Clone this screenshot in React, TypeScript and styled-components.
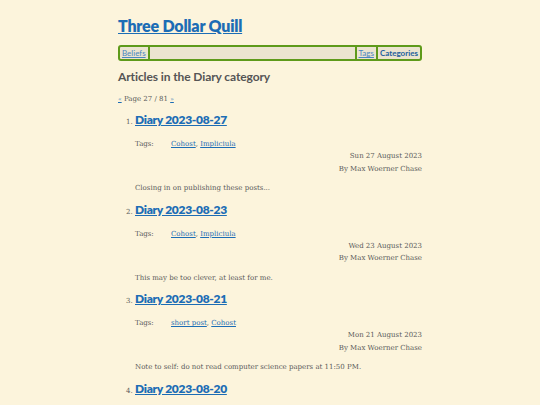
import React from "react";
import styled, { createGlobalStyle } from "styled-components";

interface IArticle {
    title: string;
    tags: string[];
    date: string;
    summary: string;
}

const articles: IArticle[] = [
    { title: "Diary 2023-08-27", tags: ["Cohost", "Impliciula"], date: "Sun 27 August 2023", summary: "Closing in on publishing these posts..." },
    { title: "Diary 2023-08-23", tags: ["Cohost", "Impliciula"], date: "Wed 23 August 2023", summary: "This may be too clever, at least for me." },
    { title: "Diary 2023-08-21", tags: ["short post", "Cohost"], date: "Mon 21 August 2023", summary: "Note to self: do not read computer science papers at 11:50 PM." },
    { title: "Diary 2023-08-20", tags: ["Cohost"], date: "Sun 20 August 2023", summary: "" },
];

const App = () => {
    return (
        <>
            <Global />
            <Page>
                <SiteTitle><a href="#">Three Dollar Quill</a></SiteTitle>
                <Nav>
                    <NavItem href="#">Beliefs</NavItem>
                    <NavSpacer />
                    <NavItem href="#">Tags</NavItem>
                    <NavItem href="#" $active>Categories</NavItem>
                </Nav>
                <Heading>Articles in the Diary category</Heading>
                <Pager>
                    <a href="#">«</a> Page 27 / 81 <a href="#">»</a>
                </Pager>
                <List>
                    {articles.map((a) => (
                        <Item key={a.title}>
                            <ItemTitle><a href="#">{a.title}</a></ItemTitle>
                            <Tags>
                                <TagLabel>Tags:</TagLabel>
                                <span>
                                    {a.tags.map((t, i) => (
                                        <React.Fragment key={t}>
                                            {i > 0 && ", "}
                                            <a href="#">{t}</a>
                                        </React.Fragment>
                                    ))}
                                </span>
                            </Tags>
                            <Meta>
                                <div>{a.date}</div>
                                <div>By Max Woerner Chase</div>
                            </Meta>
                            <Summary>{a.summary}</Summary>
                        </Item>
                    ))}
                </List>
            </Page>
        </>
    );
};

const Global = createGlobalStyle`
    html, body {
        margin: 0;
        background: #fcf4dc;
        overflow: hidden;
    }
    a {
        color: #1c6db5;
    }
`;

const Page = styled.div`
    width: 304px;
    margin: 0 auto;
    padding-top: 14px;
    font-family: "DejaVu Serif", serif;
    color: #5a5a5a;
`;

const SiteTitle = styled.h1`
    margin: 0;
    font-family: Lato, sans-serif;
    font-size: 16px;
    font-weight: 800;
    line-height: 24px;
    letter-spacing: -0.2px;
`;

const Nav = styled.nav`
    margin-top: 7px;
    height: 12px;
    display: flex;
    align-items: stretch;
    background: #ebe4cf;
    border: 2px solid #5e9a1a;
    border-radius: 3px;
    font-family: Lato, sans-serif;
    font-size: 8px;
    line-height: 12px;
`;

const NavItem = styled.a<{ $active?: boolean }>`
    padding: 0 2px;
    font-weight: ${(p) => (p.$active ? 700 : 400)};
    text-decoration: ${(p) => (p.$active ? "none" : "underline")};
    color: ${(p) => (p.$active ? "#225f9c" : "#4a86c0")};
    & + & {
        border-left: 2px solid #5e9a1a;
    }
`;

const NavSpacer = styled.div`
    flex: 1;
    border-left: 2px solid #5e9a1a;
    border-right: 2px solid #5e9a1a;
`;

const Heading = styled.h2`
    margin: 7px 0 0;
    font-family: Lato, sans-serif;
    font-size: 12px;
    font-weight: 700;
    line-height: 18px;
    letter-spacing: -0.1px;
    color: #555;
`;

const Pager = styled.div`
    margin-top: 7px;
    font-size: 7px;
    line-height: 12px;
    a {
        font-size: 6px;
    }
`;

const List = styled.ol`
    margin: 6px 0 0;
    padding-left: 17px;
    font-size: 7px;
`;

const Item = styled.li`
    margin-bottom: 6.5px;
    &::marker {
        font-size: 7px;
    }
`;

const ItemTitle = styled.h3`
    display: inline;
    margin: 0;
    font-family: Lato, sans-serif;
    font-size: 12px;
    font-weight: 800;
    line-height: 18px;
    letter-spacing: -0.3px;
`;

const Tags = styled.div`
    margin-top: 9px;
    display: flex;
    line-height: 12px;
`;

const TagLabel = styled.span`
    width: 36px;
`;

const Meta = styled.div`
    text-align: right;
    line-height: 12.5px;
`;

const Summary = styled.p`
    margin: 7px 0 0;
    line-height: 12px;
`;

export default App;
